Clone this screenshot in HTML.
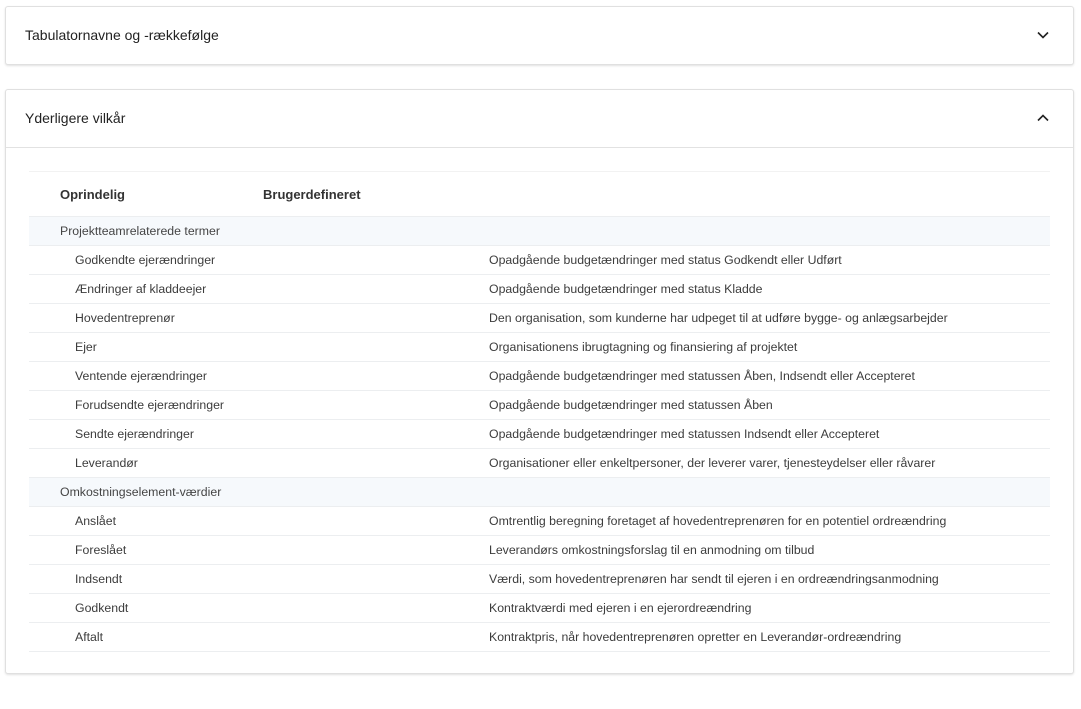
<!DOCTYPE html>
<html><head><meta charset="utf-8"><style>
body{margin:0;background:#fff;font-family:"Liberation Sans",sans-serif;color:#3c3c3c;width:1081px;height:709px;overflow:hidden;position:relative}
.card{position:absolute;left:5px;width:1067px;background:#fff;border:1px solid #e0e0e0;border-radius:3px;box-shadow:0 1px 2px rgba(0,0,0,.12)}
.title{position:absolute;left:19px;font-size:14px;color:#222}
.chev{position:absolute;right:24px}
.hdrline{position:absolute;left:0;right:0;top:57px;border-top:1px solid #e2e2e2}
table{position:absolute;left:23px;top:81px;width:1021px;border-collapse:collapse;font-size:12.3px}
td,th{height:28px;border-bottom:1px solid #eceef0;padding:0;text-align:left;white-space:nowrap}
th{height:44px;font-size:13px;font-weight:bold;color:#333;border-top:1px solid #f2f2f2}
tr.g td{background:#f6f9fc;padding-left:31px;color:#444}
td.a{padding-left:46px;width:414px}
</style></head><body>
<div class="card" style="top:6px;height:57px">
<div class="title" style="top:20px">Tabulatornavne og -rækkefølge</div>
<svg class="chev" style="top:23px" width="12" height="10" viewBox="0 0 12 10"><path d="M1 2.5 L6 7.5 L11 2.5" fill="none" stroke="#222" stroke-width="1.6"/></svg>
</div>
<div class="card" style="top:89px;height:583px">
<div class="title" style="top:20px">Yderligere vilkår</div>
<svg class="chev" style="top:23px" width="12" height="10" viewBox="0 0 12 10"><path d="M1 7.5 L6 2.5 L11 7.5" fill="none" stroke="#222" stroke-width="1.6"/></svg>
<div class="hdrline"></div>
<table>
<tr><th style="padding-left:31px;width:203px">Oprindelig</th><th style="width:226px">Brugerdefineret</th><th></th></tr>
<tr class="g"><td colspan="3">Projektteamrelaterede termer</td></tr>
<tr><td class="a" colspan="2">Godkendte ejerændringer</td><td>Opadgående budgetændringer med status Godkendt eller Udført</td></tr>
<tr><td class="a" colspan="2">Ændringer af kladdeejer</td><td>Opadgående budgetændringer med status Kladde</td></tr>
<tr><td class="a" colspan="2">Hovedentreprenør</td><td>Den organisation, som kunderne har udpeget til at udføre bygge- og anlægsarbejder</td></tr>
<tr><td class="a" colspan="2">Ejer</td><td>Organisationens ibrugtagning og finansiering af projektet</td></tr>
<tr><td class="a" colspan="2">Ventende ejerændringer</td><td>Opadgående budgetændringer med statussen Åben, Indsendt eller Accepteret</td></tr>
<tr><td class="a" colspan="2">Forudsendte ejerændringer</td><td>Opadgående budgetændringer med statussen Åben</td></tr>
<tr><td class="a" colspan="2">Sendte ejerændringer</td><td>Opadgående budgetændringer med statussen Indsendt eller Accepteret</td></tr>
<tr><td class="a" colspan="2">Leverandør</td><td>Organisationer eller enkeltpersoner, der leverer varer, tjenesteydelser eller råvarer</td></tr>
<tr class="g"><td colspan="3">Omkostningselement-værdier</td></tr>
<tr><td class="a" colspan="2">Anslået</td><td>Omtrentlig beregning foretaget af hovedentreprenøren for en potentiel ordreændring</td></tr>
<tr><td class="a" colspan="2">Foreslået</td><td>Leverandørs omkostningsforslag til en anmodning om tilbud</td></tr>
<tr><td class="a" colspan="2">Indsendt</td><td>Værdi, som hovedentreprenøren har sendt til ejeren i en ordreændringsanmodning</td></tr>
<tr><td class="a" colspan="2">Godkendt</td><td>Kontraktværdi med ejeren i en ejerordreændring</td></tr>
<tr><td class="a" colspan="2">Aftalt</td><td>Kontraktpris, når hovedentreprenøren opretter en Leverandør-ordreændring</td></tr>
</table>
</div>
</body></html>
